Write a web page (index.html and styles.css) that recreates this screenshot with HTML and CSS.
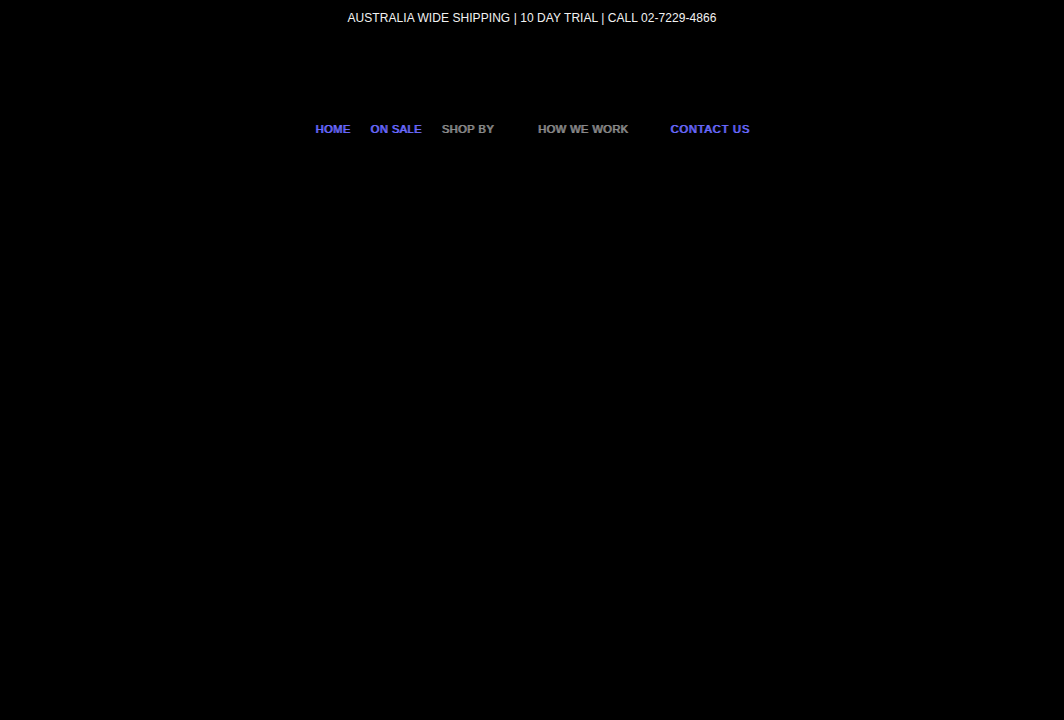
FILE: index.html
```html
<!DOCTYPE html>
<html>
<head>
<meta charset="utf-8">
<link rel="stylesheet" href="styles.css">
</head>
<body>
<div class="topbar">AUSTRALIA WIDE SHIPPING | 10 DAY TRIAL | CALL 02-7229-4866</div>
<nav class="nav">
  <a class="item link">HOME</a>
  <a class="item link">ON SALE</a>
  <a class="item plain drop">SHOP BY</a>
  <a class="item plain drop">HOW WE WORK</a>
  <a class="item link wide">CONTACT US</a>
</nav>
</body>
</html>
```
FILE: styles.css
```css
html, body {
  margin: 0;
  padding: 0;
  background: #000;
  height: 100%;
}
body {
  font-family: "Liberation Sans", Arial, sans-serif;
}
.topbar {
  color: #f2f2f2;
  font-size: 12px;
  letter-spacing: 0.06px;
  text-align: center;
  padding-top: 11px;
  height: 20px;
  line-height: 15px;
}
.nav {
  display: flex;
  justify-content: center;
  margin-top: 91px;
  gap: 20px;
  padding-left: 1px;
}
.item {
  font-size: 11px;
  letter-spacing: 0.5px;
  line-height: 14px;
  text-shadow: 1px 0 0 currentColor;
}
.link {
  color: #6a6aff;
}
.wide {
  letter-spacing: 0.9px;
}
.plain {
  color: #8c8c8c;
}
.drop {
  padding-right: 22px;
}
.nav .drop + .drop {
  margin-left: 2px;
}
```
